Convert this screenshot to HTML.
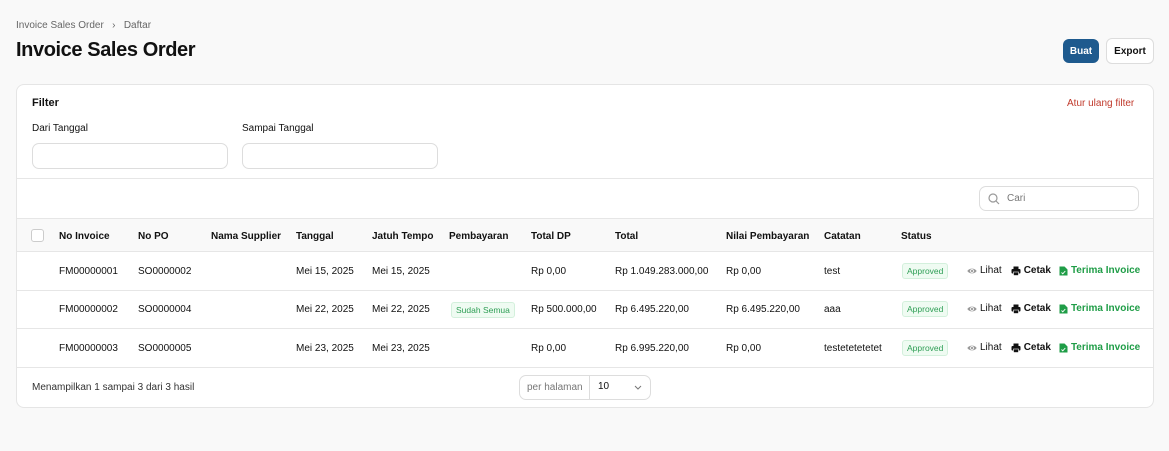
<!DOCTYPE html>
<html><head><meta charset="utf-8"><style>
*{box-sizing:border-box;margin:0;padding:0}
body{width:1169px;height:451px;background:#f9f9f9;font-family:"Liberation Sans",sans-serif;color:#111;position:relative;overflow:hidden;font-size:10px}
.a{position:absolute;white-space:nowrap}
.card{position:absolute;left:16px;top:84px;width:1138px;height:324px;background:#fff;border:1px solid #e5e5e5;border-radius:8px;overflow:hidden}
.inp{position:absolute;height:26px;border:1px solid #ddd;border-radius:7px;background:#fff}
.hl{position:absolute;left:0;width:100%;height:1px;background:#e6e6e6}
.th{font-weight:bold;font-size:10px}
.badge{position:absolute;border:1px solid #d3f0dc;background:#effbf2;color:#2e9e55;font-size:8.5px;border-radius:3px;padding:2px 4px}
.g{color:#777}
.gr{color:#1f9d47;font-weight:bold}
.act{display:flex;align-items:center;gap:3px;height:12px;line-height:12px}
.act svg{display:block}
.btn{display:flex;align-items:center;justify-content:center;font-size:10px;font-weight:bold;border-radius:6px}
</style></head><body>
<div class="a" style="left:16px;top:20px;font-size:10px;color:#666">Invoice Sales Order &nbsp;&nbsp;›&nbsp;&nbsp; Daftar</div>
<div class="a" style="left:16px;top:39px;font-size:20px;font-weight:bold;letter-spacing:-0.4px">Invoice Sales Order</div>
<div class="a btn" style="left:1063px;top:39px;width:36px;height:24px;background:#1e5a8e;color:#fff">Buat</div>
<div class="a btn" style="left:1106px;top:38px;width:48px;height:26px;background:#fff;border:1px solid #ddd">Export</div>
<div class="card">
<div class="a" style="left:15px;top:12px;font-size:11px;font-weight:bold">Filter</div>
<div class="a" style="left:1050px;top:13px;font-size:10px;color:#c0392b">Atur ulang filter</div>
<div class="a" style="left:15px;top:38px">Dari Tanggal</div>
<div class="a" style="left:225px;top:38px">Sampai Tanggal</div>
<div class="inp" style="left:15px;top:58px;width:196px"></div>
<div class="inp" style="left:225px;top:58px;width:196px"></div>
<div class="hl" style="top:93px"></div>
<div class="inp" style="left:962px;top:101px;width:160px;height:25px"></div>
<svg class="a" style="left:971px;top:108px" width="12" height="12" viewBox="0 0 12 12"><circle cx="5" cy="5" r="4" fill="none" stroke="#999" stroke-width="1.2"/><path d="M8 8l3 3" stroke="#999" stroke-width="1.2"/></svg>
<div class="a g" style="left:990px;top:108px">Cari</div>
<div class="a" style="left:0;top:134px;width:100%;height:33px;background:#f9f9f9"></div>
<div class="hl" style="top:133px"></div>
<div class="hl" style="top:166px"></div>
<div class="a" style="left:14px;top:144px;width:13px;height:13px;border:1px solid #ccc;border-radius:3px;background:#fff"></div>
<div class="a th" style="left:42px;top:146px">No Invoice</div>
<div class="a th" style="left:121px;top:146px">No PO</div>
<div class="a th" style="left:194px;top:146px">Nama Supplier</div>
<div class="a th" style="left:279px;top:146px">Tanggal</div>
<div class="a th" style="left:355px;top:146px">Jatuh Tempo</div>
<div class="a th" style="left:432px;top:146px">Pembayaran</div>
<div class="a th" style="left:514px;top:146px">Total DP</div>
<div class="a th" style="left:598px;top:146px">Total</div>
<div class="a th" style="left:709px;top:146px">Nilai Pembayaran</div>
<div class="a th" style="left:807px;top:146px">Catatan</div>
<div class="a th" style="left:884px;top:146px">Status</div>
<div class="hl" style="top:205px"></div>
<div class="hl" style="top:243px"></div>
<div class="hl" style="top:282px"></div>

<div class="a" style="left:42px;top:181px">FM00000001</div><div class="a" style="left:121px;top:181px">SO0000002</div><div class="a" style="left:279px;top:181px">Mei 15, 2025</div><div class="a" style="left:355px;top:181px">Mei 15, 2025</div><div class="a" style="left:514px;top:181px">Rp 0,00</div><div class="a" style="left:598px;top:181px">Rp 1.049.283.000,00</div><div class="a" style="left:709px;top:181px">Rp 0,00</div><div class="a" style="left:807px;top:181px">test</div>

<div class="a" style="left:42px;top:219px">FM00000002</div><div class="a" style="left:121px;top:219px">SO0000004</div><div class="a" style="left:279px;top:219px">Mei 22, 2025</div><div class="a" style="left:355px;top:219px">Mei 22, 2025</div><div class="badge" style="left:434px;top:217px">Sudah Semua</div><div class="a" style="left:514px;top:219px">Rp 500.000,00</div><div class="a" style="left:598px;top:219px">Rp 6.495.220,00</div><div class="a" style="left:709px;top:219px">Rp 6.495.220,00</div><div class="a" style="left:807px;top:219px">aaa</div>

<div class="a" style="left:42px;top:258px">FM00000003</div><div class="a" style="left:121px;top:258px">SO0000005</div><div class="a" style="left:279px;top:258px">Mei 23, 2025</div><div class="a" style="left:355px;top:258px">Mei 23, 2025</div><div class="a" style="left:514px;top:258px">Rp 0,00</div><div class="a" style="left:598px;top:258px">Rp 6.995.220,00</div><div class="a" style="left:709px;top:258px">Rp 0,00</div><div class="a" style="left:807px;top:258px">testetetetetet</div>

<div class="badge" style="left:885px;top:178px">Approved</div>
<div class="badge" style="left:885px;top:216px">Approved</div>
<div class="badge" style="left:885px;top:255px">Approved</div>

<div class="a act" style="left:950px;top:180px"><svg width="10" height="10" viewBox="0 0 10 10"><path d="M0.3 5C2 1.8 8 1.8 9.7 5C8 8.2 2 8.2 0.3 5Z" fill="#9a9a9a"/><circle cx="5" cy="5" r="1.9" fill="#fff"/><circle cx="5" cy="5" r="1.1" fill="#9a9a9a"/></svg><span style="margin-right:6px">Lihat</span><svg width="10" height="10" viewBox="0 0 10 10"><rect x="2.5" y="0.5" width="5" height="3" fill="#111"/><rect x="0.5" y="3" width="9" height="4.5" rx="1" fill="#111"/><rect x="2.5" y="6" width="5" height="3.5" fill="#111" stroke="#fff" stroke-width="0.6"/></svg><b style="margin-right:5px">Cetak</b><svg width="9" height="10" viewBox="0 0 9 10"><path d="M0.5 0.5H5.5L8.5 3.5V9.5H0.5Z" fill="#1f9d47"/><path d="M2.5 6.5l1.3 1.3 2.5-2.8" stroke="#fff" stroke-width="0.9" fill="none"/></svg><span class="gr">Terima Invoice</span></div>
<div class="a act" style="left:950px;top:218px"><svg width="10" height="10" viewBox="0 0 10 10"><path d="M0.3 5C2 1.8 8 1.8 9.7 5C8 8.2 2 8.2 0.3 5Z" fill="#9a9a9a"/><circle cx="5" cy="5" r="1.9" fill="#fff"/><circle cx="5" cy="5" r="1.1" fill="#9a9a9a"/></svg><span style="margin-right:6px">Lihat</span><svg width="10" height="10" viewBox="0 0 10 10"><rect x="2.5" y="0.5" width="5" height="3" fill="#111"/><rect x="0.5" y="3" width="9" height="4.5" rx="1" fill="#111"/><rect x="2.5" y="6" width="5" height="3.5" fill="#111" stroke="#fff" stroke-width="0.6"/></svg><b style="margin-right:5px">Cetak</b><svg width="9" height="10" viewBox="0 0 9 10"><path d="M0.5 0.5H5.5L8.5 3.5V9.5H0.5Z" fill="#1f9d47"/><path d="M2.5 6.5l1.3 1.3 2.5-2.8" stroke="#fff" stroke-width="0.9" fill="none"/></svg><span class="gr">Terima Invoice</span></div>
<div class="a act" style="left:950px;top:257px"><svg width="10" height="10" viewBox="0 0 10 10"><path d="M0.3 5C2 1.8 8 1.8 9.7 5C8 8.2 2 8.2 0.3 5Z" fill="#9a9a9a"/><circle cx="5" cy="5" r="1.9" fill="#fff"/><circle cx="5" cy="5" r="1.1" fill="#9a9a9a"/></svg><span style="margin-right:6px">Lihat</span><svg width="10" height="10" viewBox="0 0 10 10"><rect x="2.5" y="0.5" width="5" height="3" fill="#111"/><rect x="0.5" y="3" width="9" height="4.5" rx="1" fill="#111"/><rect x="2.5" y="6" width="5" height="3.5" fill="#111" stroke="#fff" stroke-width="0.6"/></svg><b style="margin-right:5px">Cetak</b><svg width="9" height="10" viewBox="0 0 9 10"><path d="M0.5 0.5H5.5L8.5 3.5V9.5H0.5Z" fill="#1f9d47"/><path d="M2.5 6.5l1.3 1.3 2.5-2.8" stroke="#fff" stroke-width="0.9" fill="none"/></svg><span class="gr">Terima Invoice</span></div>

<div class="a" style="left:15px;top:297px;color:#333">Menampilkan 1 sampai 3 dari 3 hasil</div>
<div class="inp" style="left:502px;top:290px;width:132px;height:25px"></div>
<div class="a" style="left:572px;top:290px;width:1px;height:25px;background:#ddd"></div>
<div class="a g" style="left:510px;top:297px">per halaman</div>
<div class="a" style="left:581px;top:296px">10</div>
<svg class="a" style="left:617px;top:300px" width="8" height="5" viewBox="0 0 8 5"><path d="M1 1l3 3 3-3" stroke="#777" fill="none"/></svg>
</div>
</body></html>
